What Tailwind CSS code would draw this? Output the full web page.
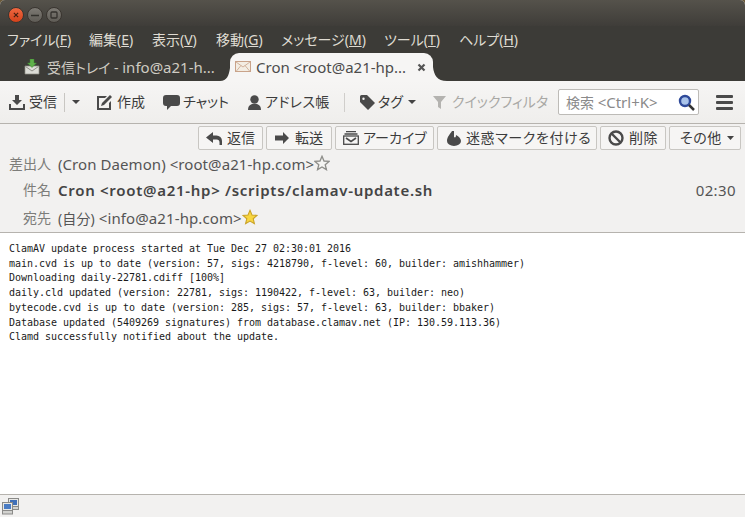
<!DOCTYPE html>
<html lang="ja"><head><meta charset="utf-8">
<script src="https://cdn.jsdelivr.net/npm/@tailwindcss/browser@4"></script>
</head>
<body class="m-0 bg-[#6b5a3a]">
<div class="w-[745px] h-[517px] overflow-hidden flex flex-col rounded-t-[5px] bg-[#f2f1f0] font-['Noto_Sans','Noto_Sans_CJK_JP',sans-serif] [font-feature-settings:'palt'] text-[14px] text-[#3c3c3c]">
  <!-- title bar -->
  <div class="h-[26px] shrink-0 flex items-center gap-[3px] pl-[8px] pt-[4px] bg-gradient-to-b from-[#55524b] to-[#3f3d39]">
    <div class="w-[16px] h-[16px] rounded-full bg-gradient-to-b from-[#f0673f] to-[#d4421a] border border-[#3a3530] flex items-center justify-center">
      <svg width="6" height="6" viewBox="0 0 7 7"><path d="M1 1l5 5M6 1l-5 5" stroke="#4a2010" stroke-width="1.4"/></svg>
    </div>
    <div class="w-[16px] h-[16px] rounded-full bg-gradient-to-b from-[#7d7a74] to-[#5f5c56] border border-[#3a3530] flex items-center justify-center">
      <svg width="8" height="7" viewBox="0 0 8 7"><path d="M0 3.500h8" stroke="#33312d" stroke-width="1.400"/></svg>
    </div>
    <div class="w-[16px] h-[16px] rounded-full bg-gradient-to-b from-[#7d7a74] to-[#5f5c56] border border-[#3a3530] flex items-center justify-center">
      <svg width="8" height="8" viewBox="0 0 8 8"><rect x="1" y="1" width="6" height="6" rx="1" fill="none" stroke="#33312d" stroke-width="1.300"/></svg>
    </div>
  </div>
  <!-- menu -->
  <div class="h-[26px] shrink-0 bg-[#3c3b37] text-[#dfdbd2] flex items-center pl-[7px] pt-[2px] leading-[20px]">
    <span class="w-[82px]">ファイル(<u>F</u>)</span>
    <span class="w-[63px]">編集(<u>E</u>)</span>
    <span class="w-[64px]">表示(<u>V</u>)</span>
    <span class="w-[65px]">移動(<u>G</u>)</span>
    <span class="w-[103px]">メッセージ(<u>M</u>)</span>
    <span class="w-[75px]">ツール(<u>T</u>)</span>
    <span>ヘルプ(<u>H</u>)</span>
  </div>
  <!-- tabs -->
  <div class="h-[29px] shrink-0 bg-[#3c3b37] flex items-end pl-[24px]">
    <div class="w-[206px] h-[28px] flex items-center gap-[7px] text-[#cfcbc2]">
      <svg width="16" height="16" viewBox="0 0 16 16"><path d="M1 7h14v8H1z" fill="#dcdcd6" stroke="#8f8f88" stroke-width=".7"/><path d="M1.500 7.500L8 12l6.500-4.500" fill="none" stroke="#8f8f88"/><path d="M6 0h4v4h2.500L8 8.500 3.500 4H6z" fill="#5fb04a" stroke="#3e8430" stroke-width=".5"/></svg>
      <span class="whitespace-nowrap">受信トレイ - <span class="text-[15px]">info@a21-h...</span></span>
    </div>
    <div class="relative w-[203px] h-[28px] bg-[#f6f5f4] rounded-t-[9px] flex items-center pl-[5px] text-[#4c4c4c]">
      <svg class="absolute left-[-10px] bottom-0" width="10" height="13" viewBox="0 0 10 13"><path d="M10 0C9 7 7 13 0 13H10z" fill="#f6f5f4"/></svg>
      <svg class="absolute right-[-14px] bottom-0" width="14" height="14" viewBox="0 0 14 14"><path d="M0 0C1 8 4 14 14 14H0z" fill="#f6f5f4"/></svg>
      <svg width="16" height="12" viewBox="0 0 16 12"><rect x=".5" y=".5" width="15" height="10" fill="#f3ede3" stroke="#c9a38a"/><path d="M1 1l7 5 7-5M1 10.500l5-6M15 10.500l-5-6" fill="none" stroke="#c9a38a" stroke-width=".8"/></svg>
      <span class="ml-[5px] whitespace-nowrap text-[15px]">Cron &lt;root@a21-hp...</span>
      <svg class="absolute left-[187px] top-[10px]" width="9" height="9" viewBox="0 0 9 9"><path d="M1.500 1.500l6 6M7.500 1.500l-6 6" stroke="#555" stroke-width="2.200"/></svg>
    </div>
  </div>
  <!-- toolbar -->
  <div class="h-[43px] shrink-0 bg-gradient-to-b from-[#f6f5f4] to-[#efeeec] border-b border-[#b6b3ae] flex items-center pl-[9px] text-[#3c3c3c] leading-none">
    <svg width="16" height="15" viewBox="0 0 16 15" fill="#4a4a4a"><path d="M6 0h4v5h3L8 10 3 5h3z"/><path d="M0 9h2v4h12V9h2v6H0z"/></svg>
    <span class="ml-[4px] w-[35px]">受信</span>
    <span class="w-px h-[19px] bg-[#c8c6c2]"></span>
    <svg class="ml-[7px]" width="8" height="4" viewBox="0 0 8 4" fill="#444"><path d="M0 0h8L4 4z"/></svg>
    <svg class="ml-[17px]" width="15" height="15" viewBox="0 0 15 15" fill="#4a4a4a"><path d="M0 1h10L8 3H2v10h10V8l2-2v9H0z"/><path d="M13 0l2 2-8 8-3 1 1-3z"/></svg>
    <span class="ml-[5px] w-[46px]">作成</span>
    <svg width="17" height="15" viewBox="0 0 17 15" fill="#4a4a4a"><path d="M3 0h11a3 3 0 013 3v5a3 3 0 01-3 3H8l-4 4v-4H3a3 3 0 01-3-3V3a3 3 0 013-3z"/></svg>
    <span class="ml-[3px] w-[64px] whitespace-nowrap">チャット</span>
    <svg width="15" height="15" viewBox="0 0 15 15" fill="#4a4a4a"><circle cx="7.500" cy="4.500" r="4.200"/><path d="M1 15c0-3 1-5 4-6h5c3 1 4 3 4 6z"/></svg>
    <span class="ml-[3px] w-[79px] whitespace-nowrap tracking-[0.3px]">アドレス帳</span>
    <span class="w-px h-[19px] bg-[#d0cecb]"></span>
    <svg class="ml-[15px]" width="15" height="15" viewBox="0 0 15 15" fill="#4a4a4a"><path d="M0 1.500A1.500 1.500 0 011.500 0H7l8 8-7 7-8-8zM3.500 2.500a1.200 1.200 0 100 2.400 1.200 1.200 0 000-2.400z" fill-rule="evenodd"/></svg>
    <span class="ml-[3px] w-[30px] whitespace-nowrap">タグ</span>
    <svg width="8" height="4" viewBox="0 0 8 4" fill="#444"><path d="M0 0h8L4 4z"/></svg>
    <svg class="ml-[17px]" width="13" height="13" viewBox="0 0 13 13" fill="#b4b3b0"><path d="M0 0h13L8 6v7l-3-2V6z"/></svg>
    <span class="ml-[6px] w-[106px] text-[#a9a8a5] whitespace-nowrap">クイックフィルタ</span>
    <div class="w-[141px] h-[26px] bg-white border border-[#bdbbb7] rounded-[2px] flex items-center pl-[7px] text-[#8a8a8a] whitespace-nowrap relative">
      <span>検索 <span class="text-[15px]">&lt;Ctrl+K&gt;</span></span>
      <svg class="absolute right-[3px] top-[4px]" width="17" height="17" viewBox="0 0 17 17"><circle cx="7" cy="7" r="5" fill="#aac4ea" stroke="#2f4a9a" stroke-width="2.400"/><path d="M11 11l5 5" stroke="#333" stroke-width="2.500"/></svg>
    </div>
    <div class="ml-[17px] w-[17px] flex flex-col gap-[3px]">
      <span class="h-[3px] bg-[#4a4a4a] rounded-[1px]"></span><span class="h-[3px] bg-[#4a4a4a] rounded-[1px]"></span><span class="h-[3px] bg-[#4a4a4a] rounded-[1px]"></span>
    </div>
  </div>
  <!-- header pane -->
  <div class="h-[109px] shrink-0 border-b border-[#b6b3ae] relative">
    <div class="flex justify-end gap-[3px] pt-[2px] pr-[4px] leading-none">
      <div class="w-[65px] h-[24px] bg-[#f6f5f4] border border-[#c8c6c2] rounded-[2px] flex items-center pl-[7px]">
        <svg width="16" height="13" viewBox="0 0 16 13" fill="#4a4a4a"><path d="M7 0v3.500h3.500A5.500 5.500 0 0116 9v4h-2.500v-2.500a3 3 0 00-3-3H7V11L0 5.500z"/></svg>
        <span class="ml-[5px]">返信</span>
      </div>
      <div class="w-[66px] h-[24px] bg-[#f6f5f4] border border-[#c8c6c2] rounded-[2px] flex items-center pl-[8px]">
        <svg width="14" height="12" viewBox="0 0 14 12" fill="#4a4a4a"><path d="M8 0l6 6-6 6V8.500H0v-5h8z"/></svg>
        <span class="ml-[6px]">転送</span>
      </div>
      <div class="w-[99px] h-[24px] bg-[#f6f5f4] border border-[#c8c6c2] rounded-[2px] flex items-center pl-[7px]">
        <svg width="16" height="14" viewBox="0 0 16 14" fill="none" stroke="#4a4a4a" stroke-width="1.300"><path d="M3 .7h10M1.500 3h13"/><rect x=".7" y="5" width="14.600" height="8.300"/><path d="M3 7l5 3.500L13 7" stroke-width="1.600"/></svg>
        <span class="ml-[4px] whitespace-nowrap">アーカイブ</span>
      </div>
      <div class="w-[160px] h-[24px] bg-[#f6f5f4] border border-[#c8c6c2] rounded-[2px] flex items-center pl-[9px]">
        <svg width="14" height="15" viewBox="0 0 14 15" fill="#4a4a4a"><path d="M5 0h2v6c1 1 2 .5 2-2 3 1.500 5 4 5 6a7 5 0 01-14 0C0 6 3 3 5 0z"/></svg>
        <span class="ml-[5px] whitespace-nowrap tracking-[0.6px]">迷惑マークを付ける</span>
      </div>
      <div class="w-[66px] h-[24px] bg-[#f6f5f4] border border-[#c8c6c2] rounded-[2px] flex items-center pl-[7px]">
        <svg width="16" height="16" viewBox="0 0 16 16" fill="none" stroke="#4a4a4a" stroke-width="2.400"><circle cx="8" cy="8" r="6.500"/><path d="M3.500 3.500l9 9"/></svg>
        <span class="ml-[5px] tracking-[0.5px]">削除</span>
      </div>
      <div class="w-[72px] h-[24px] bg-[#f6f5f4] border border-[#c8c6c2] rounded-[2px] flex items-center pl-[10px]">
        <span class="whitespace-nowrap tracking-[0.5px]">その他</span>
        <svg class="ml-[5px]" width="7" height="4" viewBox="0 0 7 4" fill="#444"><path d="M0 0h7L3.500 4z"/></svg>
      </div>
    </div>
    <div class="flex items-center h-[24px] mt-[2px] leading-none">
      <span class="w-[51px] text-right text-[#7d7d7a] whitespace-nowrap">差出人</span>
      <span class="ml-[7px] text-[15px] tracking-[0.07px] text-[#555] whitespace-nowrap">(Cron Daemon) &lt;root@a21-hp.com&gt;</span>
      <svg width="16" height="16" viewBox="0 0 24 24" class="mb-[2px]"><path d="M12 2l3 7 7.500.6-5.700 5 1.800 7.400L12 18l-6.600 4 1.800-7.400-5.700-5L9 9z" fill="#f4f4f2" stroke="#8e8e8a" stroke-width="2"/></svg>
    </div>
    <div class="flex items-center h-[28px] leading-none">
      <span class="w-[51px] text-right text-[#7d7d7a]">件名</span>
      <span class="ml-[7px] text-[15px] font-semibold tracking-[0.71px] text-[#444] whitespace-nowrap">Cron &lt;root@a21-hp&gt; /scripts/clamav-update.sh</span>
      <span class="ml-auto mr-[9px] text-[15px] tracking-[0.4px] text-[#555]">02:30</span>
    </div>
    <div class="flex items-center h-[28px] leading-none">
      <span class="w-[51px] text-right text-[#7d7d7a]">宛先</span>
      <span class="ml-[7px] text-[15px] tracking-[0.1px] text-[#555] whitespace-nowrap"><span class="text-[14px]">(自分)</span> &lt;info@a21-hp.com&gt;</span>
      <svg width="16" height="16" viewBox="0 0 24 24" class="mb-[2px]"><path d="M12 2l3 7 7.500.6-5.700 5 1.800 7.400L12 18l-6.600 4 1.800-7.400-5.700-5L9 9z" fill="#f8d640" stroke="#c9a227" stroke-width="1.600"/></svg>
    </div>
  </div>
  <!-- body -->
  <div class="flex-1 bg-white pl-[9px] pt-[9px] font-['DejaVu_Sans_Mono','Noto_Sans_CJK_JP',monospace] [font-feature-settings:normal] text-[10px] tracking-[-0.02px] leading-[14.7px] text-[#1a1a1a] whitespace-pre">ClamAV update process started at Tue Dec 27 02:30:01 2016
main.cvd is up to date (version: 57, sigs: 4218790, f-level: 60, builder: amishhammer)
Downloading daily-22781.cdiff [100%]
daily.cld updated (version: 22781, sigs: 1190422, f-level: 63, builder: neo)
bytecode.cvd is up to date (version: 285, sigs: 57, f-level: 63, builder: bbaker)
Database updated (5409269 signatures) from database.clamav.net (IP: 130.59.113.36)
Clamd successfully notified about the update.</div>
  <!-- status -->
  <div class="h-[23px] shrink-0 border-t border-[#b6b3ae] bg-[#f2f1f0] flex items-start pl-[2px] pt-[3px]">
    <svg width="17" height="17" viewBox="0 0 17 17"><rect x="6.500" y=".5" width="10" height="8" fill="#e8e8e6" stroke="#8a8a88"/><rect x="8" y="2" width="7" height="5" fill="#3f6fb8"/><rect x="6.500" y="8.500" width="10" height="3" fill="#d2d2cf" stroke="#8a8a88"/><rect x=".5" y="4.500" width="10" height="8" fill="#e8e8e6" stroke="#8a8a88"/><rect x="2" y="6" width="7" height="5" fill="#4a7cc4"/><rect x=".5" y="12.500" width="10" height="3.500" fill="#d2d2cf" stroke="#8a8a88"/></svg>
  </div>
</div>
</body></html>
